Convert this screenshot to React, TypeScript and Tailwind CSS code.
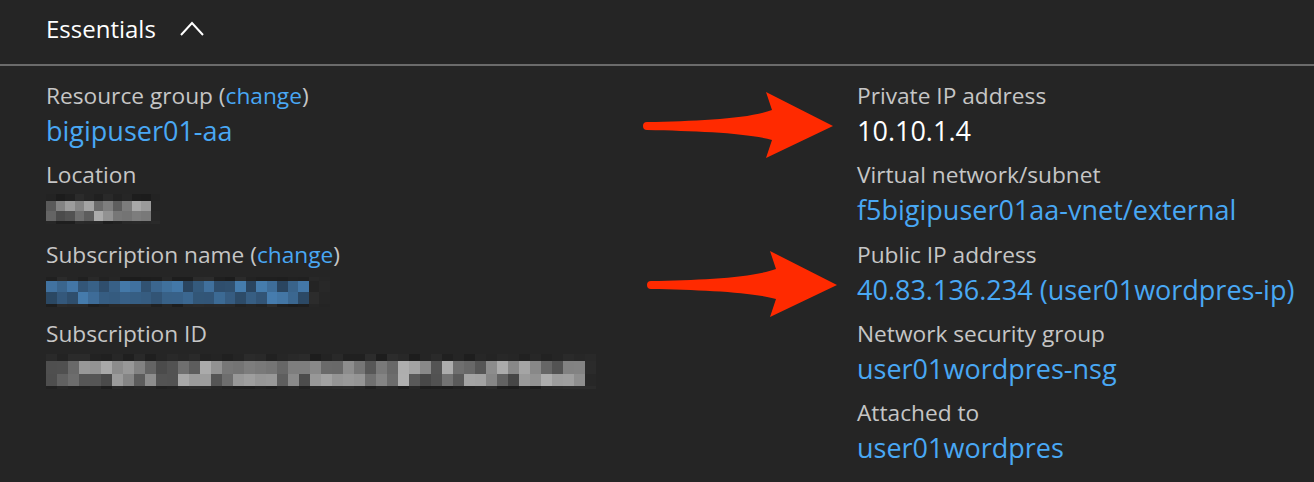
import React from "react";

const FONT = { fontFamily: '"Open Sans", "Noto Sans", sans-serif' };

function hash(n: number) {
  let x = Math.sin(n * 12.9898 + 78.233) * 43758.5453;
  return x - Math.floor(x);
}

function grayCell(seed: number, lo: number, hi: number) {
  const v = Math.round(lo + hash(seed) * (hi - lo));
  return `rgb(${v},${v},${v})`;
}

function blueCell(seed: number) {
  const t = hash(seed);
  const r = Math.round(40 + t * 30);
  const g = Math.round(65 + t * 60);
  const b = Math.round(90 + t * 85);
  return `rgb(${r},${g},${b})`;
}

function Mosaic({
  cols,
  cell,
  rowHeights,
  kind,
  seed,
  darkTail = 1,
}: {
  cols: number;
  cell: number;
  rowHeights: number[];
  kind: "gray" | "blue";
  seed: number;
  darkTail?: number;
}) {
  return (
    <div className="flex flex-col">
      {rowHeights.map((h, r) => {
        const edge = r === 0 || r === rowHeights.length - 1;
        return (
          <div key={r} className="flex">
            {Array.from({ length: cols }).map((_, c) => {
              const s = seed + r * 101 + c * 7;
              let color: string;
              if (c >= cols - darkTail) color = grayCell(s, 34, 44);
              else if (edge) color = grayCell(s, 28, 44);
              else if (kind === "gray") color = grayCell(s, 70, 175);
              else color = blueCell(s);
              return (
                <div
                  key={c}
                  style={{ width: cell, height: h, backgroundColor: color }}
                />
              );
            })}
          </div>
        );
      })}
    </div>
  );
}

function Label({ children }: { children: React.ReactNode }) {
  return (
    <div className="text-[22.7px] leading-[30px] text-[#c6c6c6] whitespace-nowrap">
      {children}
    </div>
  );
}

function Link({ children }: { children: React.ReactNode }) {
  return (
    <div className="text-[27px] leading-[40px] text-[#49a8f4] whitespace-nowrap">
      {children}
    </div>
  );
}

function Change() {
  return (
    <>
      {" "}
      (<span className="text-[#49a8f4]">change</span>)
    </>
  );
}

function Arrow({ x, y }: { x: number; y: number }) {
  return (
    <g transform={`translate(${x},${y})`}>
      <path
        d="M0,-4 C50,-5 100,-7 125,-16 L119,-34 L186,0 L119,32 L125,14 C100,7 50,5 0,4 A4,4 0 0 1 0,-4 Z"
        fill="#ff2a00"
      />
    </g>
  );
}

export default function App() {
  return (
    <div
      className="relative w-[1314px] h-[482px] overflow-hidden bg-[#252525]"
      style={FONT}
    >
      <div className="flex h-[66px] items-center pl-[46px] pb-[6px] border-b-2 border-[#6b6b6b]">
        <span className="text-[24px] text-white">Essentials</span>
        <svg
          width="26"
          height="16"
          viewBox="0 0 26 16"
          className="ml-[23px]"
          fill="none"
          stroke="white"
          strokeWidth="2"
        >
          <path d="M2 14 L13 2 L24 14" />
        </svg>
      </div>
      <div className="grid grid-cols-[811px_1fr] pl-[46px] pt-[15px]">
        <div className="flex flex-col gap-[9.3px]">
          <div>
            <Label>
              Resource group
              <Change />
            </Label>
            <Link>bigipuser01-aa</Link>
          </div>
          <div>
            <Label>Location</Label>
            <div className="h-[40px] pt-[4px]">
              <Mosaic cols={12} cell={9.5} rowHeights={[7, 10, 10, 3]} kind="gray" seed={3} />
            </div>
          </div>
          <div>
            <Label>
              Subscription name
              <Change />
            </Label>
            <div className="h-[40px] pt-[7px]">
              <Mosaic cols={27} cell={10.5} rowHeights={[4, 11, 12, 3]} kind="blue" seed={17} darkTail={2} />
            </div>
          </div>
          <div>
            <Label>Subscription ID</Label>
            <div className="h-[40px] pt-[5px]">
              <Mosaic cols={50} cell={11} rowHeights={[7, 13, 12, 3]} kind="gray" seed={41} />
            </div>
          </div>
        </div>
        <div className="flex flex-col gap-[9.3px]">
          <div>
            <Label>Private IP address</Label>
            <div className="text-[27px] leading-[40px] text-white">10.10.1.4</div>
          </div>
          <div>
            <Label>Virtual network/subnet</Label>
            <Link>f5bigipuser01aa-vnet/external</Link>
          </div>
          <div>
            <Label>Public IP address</Label>
            <Link>40.83.136.234 (user01wordpres-ip)</Link>
          </div>
          <div>
            <Label>Network security group</Label>
            <Link>user01wordpres-nsg</Link>
          </div>
          <div>
            <Label>Attached to</Label>
            <Link>user01wordpres</Link>
          </div>
        </div>
      </div>
      <svg
        className="absolute left-0 top-0 pointer-events-none"
        width="1314"
        height="482"
      >
        <Arrow x={647} y={126} />
        <Arrow x={651} y={285} />
      </svg>
    </div>
  );
}
